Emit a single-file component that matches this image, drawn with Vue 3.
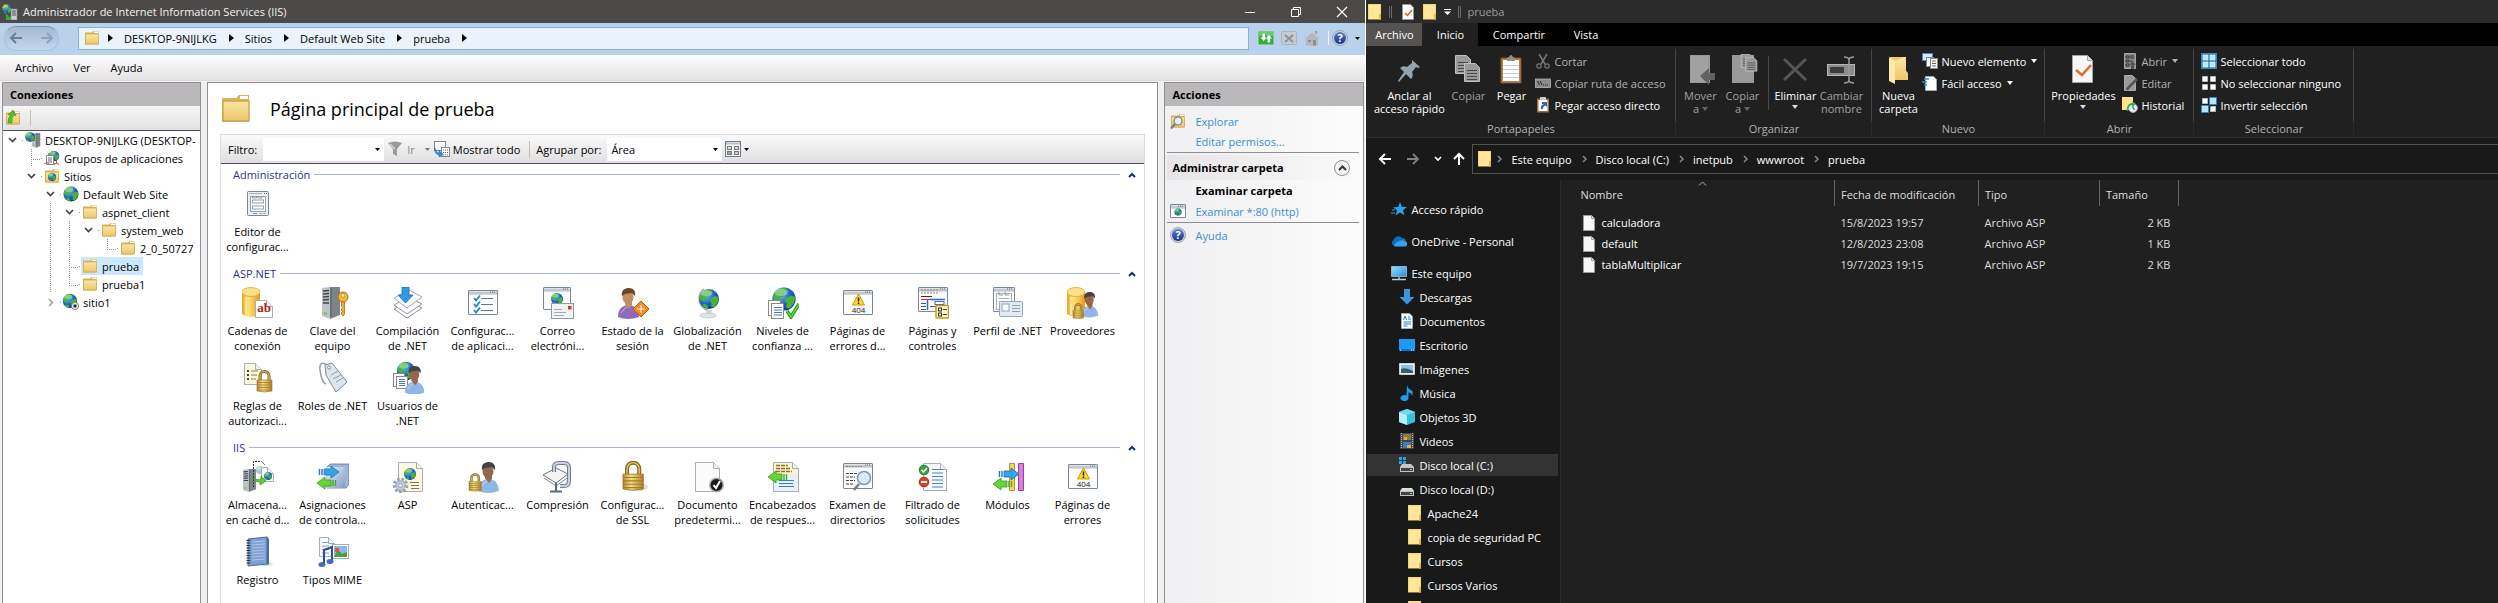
<script setup>
import { ref } from 'vue'

/* ---------- reusable drawing pieces ---------- */
const globe = (x, y, s = 1) =>
  `<g transform="translate(${x} ${y}) scale(${s})"><circle r="8" fill="url(#sea)"/><path d="M-7-3.5C-5-7-2-8 1-7.6L3-5.5 0-4 0-1.500-3-1-3.500 2-6 1-7.500-1ZM1.500-.5L5-2.500 7.500-1.500 7 3 4 6.500 1.500 6 2 3 .5 1.500ZM-4 4L-1 5-1 7.500C-3 7.200-4.500 6-5.500 5Z" fill="#46b436"/><ellipse cx="-2" cy="-4.500" rx="4.500" ry="2.500" fill="#fff" opacity=".35"/></g>`
const lock = (x, y, s = 1) =>
  `<g transform="translate(${x} ${y}) scale(${s})"><path d="M3 9V5a4.500 4.500 0 0 1 9 0v4" fill="none" stroke="#8a6a22" stroke-width="3"/><path d="M3 9V5a4.500 4.500 0 0 1 9 0v4" fill="none" stroke="#e3c878" stroke-width="1"/><path d="M0 9h15v11q-7.500 2-15 0z" fill="url(#brass)" stroke="#94701f" stroke-width=".6"/><path d="M0 11.500h15M0 14h15M0 16.500h15M0 19h15" stroke="#a27b22" stroke-width=".8"/></g>`
const person = (x, y, s = 1, coat = '#8fb6e6', skin = '#96674a', hair = '#444') =>
  `<g transform="translate(${x} ${y}) scale(${s})"><path d="M0 29C0 21 4 18 9 17q6 0 9 3 3 4 3 9-11 4-21 0z" fill="${coat}"/><path d="M7 16l4 5 3-4v-4H7z" fill="${skin}"/><ellipse cx="10" cy="9" rx="5.500" ry="7" fill="${skin}"/><path d="M4 8C3 2 7 0 11 0s7 3 6 8l-3-3-7 1z" fill="${hair}"/><path d="M3 25q3-5 6-6" stroke="#fff" stroke-width="1" opacity=".5" fill="none"/></g>`
const win = (x, y, w, h) =>
  `<rect x="${x + 0.5}" y="${y + 0.5}" width="${w - 1}" height="${h - 1}" rx=".5" fill="#fdfdfe" stroke="#7c8796"/><path d="M${x + 1} ${y + 2.5}h${w - 2}" stroke="#c3cad4" stroke-width="2"/><path d="M${x + w - 8} ${y + 2}h5" stroke="#56606e" stroke-dasharray="1 1"/><path d="M${x + 1} ${y + 4}h${w - 2}" stroke="#8d97a5" stroke-width=".7"/>`
const page = (x, y, w, h, fill = '#fbfbfc') =>
  `<path d="M${x + 0.5} ${y + 0.5}h${w - 7}l6 6v${h - 7}h-${w - 1}z" fill="${fill}" stroke="#a9adb5"/><path d="M${x + w - 6.5} ${y + 0.5}v6h6" fill="#f1f1f1" stroke="#a9adb5"/>`
const rows = (x, y, w, n, gap, color) =>
  `<path d="${Array.from({ length: n }, (_, i) => `M${x} ${y + i * gap}h${w}`).join('')}" stroke="${color}" fill="none"/>`
const server = (x, y, s = 1) =>
  `<g transform="translate(${x} ${y}) scale(${s})"><path d="M0 1l8-1v32l-8-3z" fill="#bcc2c6"/><path d="M8 0h10v28l-10 4z" fill="#7c8489"/><path d="M1 4l6-.5M1 7l6-.5M1 10l6-.5M1 13l6-.5M1 16l6 0" stroke="#3f464b" stroke-width="1.500"/><path d="M2 26l3 1" stroke="#5fd030" stroke-width="2"/><path d="M9 1v29" stroke="#565e63"/></g>`
const db = `<path d="M0 5v22q8 6 18 0V5z" fill="url(#gold)"/><ellipse cx="9" cy="5" rx="9" ry="4.500" fill="#fbe28a" stroke="#e2a62a" stroke-width=".8"/><path d="M4 10v18" stroke="#fff4bd" stroke-width="2" opacity=".7"/>`
const arrowR = (x, y) =>
  `<g transform="translate(${x} ${y})"><path d="M5 3h7V0l8 6-8 6V9H5z" fill="#35a3e8" stroke="#1d6eb5" stroke-width=".8"/><path d="M.5 3v6M3 3v6" stroke="#1d78c0" stroke-width="1.400"/></g>`
const arrowL = (x, y) =>
  `<g transform="translate(${x} ${y})"><path d="M14 3H8V0L0 6l8 6V9h6z" fill="#63d53a" stroke="#359a1c" stroke-width=".8"/><path d="M16 3v6M18.500 3v6" stroke="#3fae22" stroke-width="1.400"/></g>`
const err404 =
  win(1, 3, 30, 25) +
  `<path d="M16.500 7l6 11h-12z" fill="#ffd91c" stroke="#c99a08" stroke-linejoin="round"/><path d="M16.500 10.500v4M16.500 15.500v1.500" stroke="#222" stroke-width="1.500"/><text x="16.500" y="26" font-family="Open Sans, sans-serif" font-size="8" text-anchor="middle" fill="#222">404</text>`

/* 32 x 32 feature icons */
const art = {
  editor: `<rect x="5.500" y="3.500" width="21" height="24" rx="1" fill="#eceef2" stroke="#7e8694"/><path d="M7 5.500h13" stroke="#a8afbb"/><path d="M22 5.500h4" stroke="#4d5768" stroke-dasharray="1 1"/><rect x="8.500" y="8.500" width="15" height="15" fill="#fff" stroke="#98a0ad"/><path d="M10.500 8v2h4v-2M16 8v2h4v-2" stroke="#8790a0" fill="none"/><rect x="10.500" y="12" width="11" height="3" fill="none" stroke="#98a0ad"/><rect x="10.500" y="18" width="11" height="3" fill="none" stroke="#98a0ad"/><path d="M11 25.500h4" stroke="#29b3de"/><path d="M17 25.500h7" stroke="#a0a8b4" stroke-dasharray="3 1"/>`,
  strings: db + page(13, 13, 18, 18, '#fff') + `<text x="22" y="25" font-family="Liberation Serif, serif" font-weight="700" font-size="13" text-anchor="middle" fill="#b01818">ab</text>`,
  key: server(5, 0) + `<circle cx="26" cy="10" r="5" fill="#f5b93a" stroke="#b36f0c"/><circle cx="26" cy="8.500" r="1.800" fill="#fff" stroke="#b36f0c" stroke-width=".7"/><path d="M24.500 15h3v12l-1.500 2-1.500-1.500v-2l1-1-1-1v-2l1-1-1-1z" fill="#f0ac2e" stroke="#b36f0c" stroke-width=".8"/>`,
  compile: `<path d="M16 14l14 7-15 10L2 22z" fill="#fff" stroke="#8b9199"/><path d="M16 10l14 7-15 10L2 18z" fill="#fff" stroke="#8b9199"/><path d="M17 3l13 7-15 11L2 11z" fill="#fbfbfb" stroke="#a2a7af"/><path d="M10 0h7v8h4l-7.500 8L6 8h4z" fill="#2f9ae2" stroke="#1a6db4" stroke-width=".8"/>`,
  appconf: win(1, 3, 30, 25) + `<path d="M14 11.500h12M14 17.500h12M14 23.500h12" stroke="#6d7683"/><path d="M7 11l2 2.500 4-5M7 17l2 2.500 4-5M7 23l2 2.500 4-5" fill="none" stroke="#1c86cf" stroke-width="1.800"/>`,
  mail: win(1, 0, 28, 23) + globe(15, 12, 0.75) + `<rect x="9.500" y="16.500" width="22" height="15" fill="#f3f3f5" stroke="#9298a2"/><path d="M12 22.500h8M12 25.500h12M12 28.500h10" stroke="#a4a9b3"/><rect x="26" y="19" width="3.500" height="3.500" fill="#d43636"/>`,
  state: person(1, 1, 1, '#8d6bb8', '#c08e63', '#6b4526') + `<path d="M24 14l8 8-8 8-8-8z" fill="#f28a26" stroke="#b85508"/><path d="M24 18v8M20 22h8" stroke="#fff3d8" stroke-width="1.200"/>`,
  global: `<path d="M12 2a12 12 0 0 0 4 21" fill="none" stroke="#a9aeb5" stroke-width="2"/>${globe(17, 12, 1.25)}<path d="M14 23l1 4h4l1-4" fill="#cfd3d7"/><ellipse cx="16" cy="28.500" rx="8" ry="2.500" fill="#dfe2e5" stroke="#b5babf" stroke-width=".6"/>`,
  trust: globe(17, 12, 1.45) + `<rect x="1.500" y="13.500" width="12" height="15" fill="#fff" stroke="#8f8a7c"/><rect x="4.500" y="16.500" width="12" height="15" fill="#fff" stroke="#8f8a7c"/>${rows(7, 20.500, 8, 4, 2.500, '#4178be')}<path d="M20 24l4 6 8-13" fill="none" stroke="#2c9c1d" stroke-width="3.500"/><path d="M20 24l4 6 8-13" fill="none" stroke="#6ae04b" stroke-width="1.200"/>`,
  err404,
  controls: win(1, 0, 30, 25) + `<path d="M4 3h18M4 6h18" stroke="#8f8a6a" stroke-dasharray="2 1"/><path d="M4 9.500h11" stroke="#333" /><path d="M4 12.500h9" stroke="#d63a3a"/><path d="M13 12.500h15M10.500 13v10" stroke="#2a6ad0" stroke-width="1.500"/><path d="M4 16.500h5M4 19.500h5M4 22.500h5M13 19.500h6" stroke="#555"/><rect x="18" y="14.500" width="9" height="3" fill="none" stroke="#4c6c9c"/><rect x="19" y="18.500" width="12.500" height="12.500" rx="1" fill="#fff5c4" stroke="#c49a1e" stroke-width="1.500"/><rect x="21.500" y="21" width="3" height="3" fill="none" stroke="#333"/><rect x="21.500" y="26" width="3" height="3" fill="none" stroke="#333"/><path d="M26 22.500h4M26 27.500h4" stroke="#444"/>`,
  profile: win(1, 0, 22, 25) + `<rect x="4.500" y="6.500" width="15" height="16" fill="#fff" stroke="#a9afb9"/><path d="M7 5v3h4M13 5v3h4" stroke="#8d96a5" fill="none"/>${rows(7, 11.500, 10, 3, 3, '#a9afb9')}<rect x="7.500" y="14.500" width="23" height="15" rx="1" fill="#e2eaf3" stroke="#98a5b5"/><rect x="10" y="17" width="7" height="7" fill="#fff" stroke="#8ca0b8"/>${rows(20, 18.500, 8, 3, 3, '#8ca0b8')}`,
  providers: db + person(14, 5, 0.82) + lock(6, 17, 0.7),
  rules: page(2, 1, 18, 22, '#fdf8dc') + `<path d="M5 9h2M5 13h2M5 17h2" stroke="#444" stroke-width="2"/><path d="M9 9h7M9 13h6M9 17h5" stroke="#8b7d4d"/>` + lock(15, 9, 1),
  tag: `<path d="M11 4C6-1 2 1 3 8s2 12 6 14" fill="none" stroke="#9aa0a8" stroke-width="1.500"/><path d="M8 3l7-2 15 19-11 10L9 13z" fill="#dde6ee" stroke="#7e8b9a"/><circle cx="12" cy="5.500" r="1.500" fill="#fff" stroke="#7e8b9a"/><path d="M14 13l7-4M16 17l8-4M19 20l7-4" stroke="#8f9dad"/>`,
  users: globe(14, 9, 1.15) + `<rect x="1.500" y="11.500" width="11" height="13" fill="#fff" stroke="#8f8a7c"/><rect x="4.500" y="14.500" width="11" height="12" fill="#fff" stroke="#8f8a7c"/>${rows(7, 17.500, 6, 4, 2, '#4178be')}` + person(13, 4, 0.92),
  cache: server(1, 8, 0.72) + `<path d="M11.500 26V.5h8l4 4" fill="none" stroke="#333" stroke-dasharray="2 1"/><g opacity=".4">${globe(18, 9, 0.5)}</g>` + page(19, 6, 13, 15, '#fff') + globe(26, 15, 0.5) + `<path d="M11 17c4 2 6 2 8 1v-3l5 5-6 4v-3c-3 0-6-1-7-4z" fill="#5ccc3a" stroke="#2f8f1b" stroke-width=".7"/>`,
  handlers: `<path d="M10 6l3-3h19v20l-3 4H10z" fill="#9fb6d8" stroke="#5b7399" stroke-width=".8"/><path d="M10 6h18v21H10z" fill="url(#steel)"/>` + arrowR(2, 5) + arrowL(0, 16),
  asp: page(6, 1, 25, 30, '#fbf6dc') + globe(18, 13, 0.75) + `<path d="M18 21.500h9M19 24.500h8M19 27.500h8" stroke="#7d7550"/><circle cx="8.500" cy="24.500" r="6.500" fill="none" stroke="#8e9fb6" stroke-width="2.500" stroke-dasharray="2.500 1.900"/><circle cx="8.500" cy="24.500" r="4.800" fill="#c5d0df" stroke="#8a9ab0"/><circle cx="8.500" cy="24.500" r="2" fill="#fff" stroke="#8a9ab0"/>`,
  auth: person(11, 1, 1) + lock(2, 13, 0.82),
  compress: `<path d="M1 14L14 7l12 6-12 9z" fill="#f4f4f4" stroke="#777"/><path d="M2 17l12 8 11-8" fill="none" stroke="#888"/><path d="M12 11V6q0-4 5-4h5q5 0 5 5v13q0 5-5 5h-4" fill="none" stroke="#6f7d93" stroke-width="4"/><path d="M12 11V6q0-4 5-4h5q5 0 5 5v13q0 5-5 5h-4" fill="none" stroke="#c8d1df" stroke-width="2"/><path d="M14 22v8M8 30.500h12" stroke="#5c6880" stroke-width="2"/>`,
  ssl: `<ellipse cx="22" cy="26" rx="9" ry="4" fill="#000" opacity=".12"/>` + lock(6, 1, 1.35),
  defdoc: page(3, 1, 25, 30) + `<circle cx="24.500" cy="24" r="6.700" fill="#1b1b1b" stroke="#aaa" stroke-width="1.500"/><path d="M21.500 24l2.500 3 4-7" fill="none" stroke="#fff" stroke-width="2"/>`,
  headers: page(6, 1, 26, 30, '#e6f1fb') + `<path d="M7 2h18l0 6h6v5H7z" fill="#fdf6c8"/><path d="M9 4.500h12M9 7.500h14M9 10.500h16" stroke="#9a6a2a" stroke-width="1.500" stroke-dasharray="4 1"/><path d="M12 19.500h15M12 22.500h14M12 25.500h15" stroke="#3f7cc4"/>` + arrowL(1, 10),
  browse: win(1, 2, 30, 26) + `<path d="M4 5.500h16" stroke="#8f8a6a" stroke-dasharray="2 1"/><path d="M4 12.500h12M4 16h9M4 19.500h9M4 23h8" stroke="#3d3d3d" stroke-dasharray="3 1"/><path d="M17 23l-5 6" stroke="#7a7a7a" stroke-width="2.500"/><circle cx="22" cy="17" r="6.500" fill="#d9ecfa" stroke="#8696a8" stroke-width="1.500"/>`,
  filter: page(6, 2, 24, 28, '#f7f9fd') + rows(15, 8.500, 11, 6, 3.500, '#4a80c8') + `<circle cx="7" cy="9" r="4.800" fill="#3fa143" stroke="#287a2c"/><path d="M4.500 9l2 2 3.500-4" fill="none" stroke="#fff" stroke-width="1.500"/><circle cx="7" cy="21" r="4.800" fill="#dd4422" stroke="#a92d12"/><path d="M4 21h6" stroke="#fff" stroke-width="2"/>`,
  modules: `<path d="M17.500 2.500h5v27h-5z" fill="#f5d55a" stroke="#b9922b"/><path d="M26.500 2.500h5v27h-5z" fill="#dd7edd" stroke="#9a3f9e"/>` + arrowR(7, 7) + arrowL(1, 17),
  log: `<ellipse cx="24" cy="28" rx="7" ry="2" fill="#000" opacity=".12"/><path d="M6 3l19-2v27l-19 2z" fill="#7fa0d2" stroke="#48699c"/><path d="M25 1l2 2v25l-2 1z" fill="#48699c"/><path d="M10 6l13-1M10 9l13-1M10 12l13-1M10 15l13-1M10 18l13-1M10 21l13-1M10 24l13-1" stroke="#aec5e8"/><path d="M6.500 4v25" stroke="#333" stroke-width="4" stroke-dasharray="1 1.500"/>`,
  mime: page(2, 1, 16, 20) + rows(5, 6.500, 7, 4, 3.500, '#7ea0c8') + `<rect x="15.500" y="8.500" width="16" height="14" fill="#fff" stroke="#a5abb5"/><path d="M17 10h13v11H17z" fill="#86b9ec"/><path d="M17 21l4-8 4 5 5-2v5z" fill="#4d9e3c"/><path d="M18 12h4v4h-4z" fill="#e0552f"/><path d="M7 28V14l8-3v14" fill="none" stroke="#29509c" stroke-width="2"/><ellipse cx="5" cy="28.500" rx="3.500" ry="2.500" fill="#3c6cc4"/><ellipse cx="13" cy="25.500" rx="3.500" ry="2.500" fill="#3c6cc4"/>`
}

/* 16 x 16 icons */
const iisFolder = `<path d="M1 2.500h7l1.500-1.500h5V14.500H1z" fill="#d9b45a"/><path d="M1.500 4h13v10h-13z" fill="url(#fold)" stroke="#c9a652" stroke-width=".7"/><path d="M10 1.500h4v1.500h-4z" fill="#fff"/>`
const winFolder = `<path d="M1 0h13v15.500H1z" fill="#f6d775"/><path d="M2 1h11v14H2z" fill="#ffe699"/><path d="M12 10h2v5.500h-2z" fill="#e6b93c"/>`
const small = {
  iisFolder,
  winFolder,
  server: server(7, 1, 0.46) + globe(5, 5, 0.6),
  pools: `<path d="M4.500 3.500h8v10h-8z" fill="#fff" stroke="#888"/>${globe(10, 6, 0.65)}<path d="M2.500 5.500h7v9h-7z" fill="#fff" stroke="#888"/><path d="M4 8h4M4 10h4M4 12h4" stroke="#667"/><path d="M0 14.500q3-4 5 0M10 14.500q2-3 5 0" stroke="#c33" fill="none"/>`,
  sites: iisFolder + globe(8, 9, 0.5),
  globe: globe(8, 8, 0.95),
  globeStop: globe(7, 7, 0.9) + `<circle cx="12" cy="12" r="3.500" fill="#fff" stroke="#777"/><path d="M10.500 10.500h3v3h-3z" fill="#222"/>`,
  up: iisFolder + `<path d="M3 13q0-6 3-8H3l5-5 3 6-2-1q-3 3-2 8z" fill="#53c22c" stroke="#2c8a14" stroke-width=".6"/>`,
  funnel: `<path d="M0 2q7-3 14 0L9 8v7l-4-2V8z" fill="#9a9a9a"/><path d="M2 3l5 5" stroke="#d5d5d5" stroke-width="1.500"/>`,
  showAll: `<rect x=".5" y=".5" width="11" height="9" fill="#f8f9fb" stroke="#7c8796"/><rect x="7.500" y="6.500" width="8" height="9" fill="#fff" stroke="#7c8796"/><path d="M9 9h5M9 11.500h5M9 14h5" stroke="#567" stroke-dasharray="1 1"/><path d="M1 7q1 5 4 5v-2.500l4 4-4 3V14Q0 13 1 7z" fill="#2f8fd8" stroke="#1a62a4" stroke-width=".5"/>`,
  view: `<rect x=".5" y=".5" width="15" height="15" fill="#f5f6f8" stroke="#6f7a8a"/><path d="M1 2.500h14" stroke="#b8c0cc" stroke-width="2"/><rect x="2.500" y="5.500" width="4" height="3" fill="#dfe9b8" stroke="#777"/><rect x="9.500" y="5.500" width="4" height="3" fill="#cfe0f4" stroke="#777"/><rect x="2.500" y="10.500" width="4" height="3" fill="#9a9aea" stroke="#777"/><rect x="9.500" y="10.500" width="4" height="3" fill="#ecc8a8" stroke="#777"/>`,
  explore: iisFolder + `<path d="M5 11l-4 4.500" stroke="#777" stroke-width="2"/><circle cx="8" cy="8" r="4" fill="#dfeffa" stroke="#6f7c8a" stroke-width="1.200"/>`,
  browse: win(0, 1, 16, 14) + globe(8, 9, 0.45),
  help: `<circle cx="8" cy="8" r="7.500" fill="#cdd3dc" stroke="#8f98a6" stroke-width=".8"/><circle cx="8" cy="8" r="6" fill="url(#helpb)"/><text x="8" y="12" font-family="Open Sans, sans-serif" font-size="11" font-weight="700" text-anchor="middle" fill="#fff">?</text>`,
  refresh: `<rect x=".5" y="1.500" width="15" height="13" rx="1" fill="#2fae3c" stroke="#7cc884"/><path d="M1 2h14v4H1z" fill="#8fdc90" opacity=".6"/><path d="M4.500 3.500v4H2.500l3.200 3.500L9 7.500H7V3.500zM9.500 12.500V8.500H7.500L11 5l3.200 3.500h-2v4z" fill="#fff"/>`,
  stop: `<rect x=".5" y="1.500" width="15" height="13" rx="1" fill="#c6cbd2" stroke="#aeb4bd"/><path d="M4 5l8 7M12 5l-8 7" stroke="#8d939c" stroke-width="2"/>`,
  home: `<path d="M0 8l8-7.500L16 8l-2 1v6.500H2V9z" fill="#b2b8bf"/><path d="M1 8l7-6.500L15 8" stroke="#d9dde1" fill="none"/><path d="M11 1h2v4l-2-2z" fill="#9aa0a8"/><path d="M4 10h3v2H4zM9 10h3v5.500H9z" fill="#8a9098"/>`,
  app: globe(5, 5, 0.6) + `<path d="M3 0l-3 4 4-1z" fill="#f8c53a"/><path d="M9 5h6v11H9z" fill="#c9ced2" stroke="#81888e" stroke-width=".6"/><path d="M10 7h4M10 9h4M10 11h4" stroke="#4d555b"/><path d="M4 9l3 4 2-1v4H4z" fill="#3ea63a"/>`,
  propDoc: `<path d="M2.500.5h8l3 3v12h-11z" fill="#fff" stroke="#999"/><path d="M5 9l2.500 2.500L12 6" fill="none" stroke="#d9602b" stroke-width="1.500"/>`,
  cut: `<path d="M4 1l6 10M12 1L6 11" stroke="#777" stroke-width="1.500"/><circle cx="4" cy="13" r="2.200" fill="none" stroke="#777" stroke-width="1.200"/><circle cx="12" cy="13" r="2.200" fill="none" stroke="#777" stroke-width="1.200"/>`,
  path: `<rect x=".5" y="4" width="15" height="8.500" fill="#8a8a8a" stroke="#b5b5b5" stroke-width=".8"/><path d="M2.500 6l2 4M5 6l2 4" stroke="#222"/><path d="M8 10h6" stroke="#222" stroke-dasharray="1 1"/>`,
  pasteLink: `<path d="M2 1.500h12v14H2z" fill="#9b6b41"/><path d="M5 0h6v3H5z" fill="#c8c8c8"/><path d="M3.500 3h9v11h-9z" fill="#fff"/><path d="M6 12q-1-4 3-5H7V5h5v5l-1.500-1.500Q8 9 8 12z" fill="#2668b8"/>`,
  newItem: `<rect x=".5" y=".5" width="10" height="7" fill="#d4ecfa" stroke="#3c8cc8"/><rect x="4.500" y="4.500" width="7" height="9" fill="#fff" stroke="#888"/><rect x="8.500" y="5.500" width="7" height="10" fill="#fff" stroke="#888"/><path d="M10 8h4M10 10.500h4M10 13h4" stroke="#666"/>`,
  easy: `<path d="M3.500 1.500h8l3 3v11h-11z" fill="#fff" stroke="#aaa"/><path d="M2 4h5M0 7h5M2 10h3" stroke="#2f8fd8" stroke-width="1.300"/>`,
  open: `<path d="M2.500.5h11v15h-11z" fill="#8b8b8b" stroke="#a5a5a5"/><path d="M4 3h3v2H4zM4 7h3v2H4zM4 11h3v2H4zM8 3h4M8 5h4M8 8h3" stroke="#333" fill="none"/><path d="M9 16v-4H7l3.500-4L14 12h-2v4z" fill="#555" />`,
  edit: `<path d="M2.500.5h8l3 3v12h-11z" fill="#9a9a9a" stroke="#aaa"/><path d="M15 4L6 13l-1 2" stroke="#555" stroke-width="2.500"/>`,
  history: `<path d="M0 0h11v13H0z" fill="#ffe28a"/><circle cx="11" cy="11" r="4.500" fill="#e8eef0" stroke="#999"/><path d="M11 8.500v3l2 1" stroke="#444" fill="none"/><path d="M5 14q-1-8 6-8l-1-2 4 3-4 2.500V8q-4 1-4 6z" fill="#2fb14a"/>`,
  selAll: `<path d="M0 0h16v16H0z" fill="#2d87cf"/><path d="M2 2h5v5H2zM9 2h5v5H9zM2 9h5v5H2zM9 9h5v5H9z" fill="#bfe3fb" stroke="#fff" stroke-width=".5"/>`,
  selNone: `<path d="M1.500 1.500h5v5h-5zM9.500 1.500h5v5h-5zM1.500 9.500h5v5h-5zM9.500 9.500h5v5h-5z" fill="#fff" stroke="#bbb"/>`,
  selInv: `<path d="M1.500 1.500h5v5h-5zM9.500 9.500h5v5h-5z" fill="#fff" stroke="#bbb"/><path d="M8.500.5h7v7h-7zM.5 8.500h7v7h-7z" fill="#bfe3fb" stroke="#2d87cf"/>`,
  star: `<path d="M9 1l1.800 4.800 5.200.2-4 3.300 1.400 5L9 11.500l-4.500 3 1.500-5-4-3.300 5.200-.3z" fill="#2f9fe8"/><path d="M1 9h3M0 12h4" stroke="#2f9fe8"/>`,
  cloud: `<path d="M3 12.500a3 3 0 0 1-.5-5.500A5 5 0 0 1 11 5a4 4 0 0 1 4 4q1 3-2 3.500z" fill="#0f6cbd"/><path d="M4 13.500h9.500a2.500 2.500 0 0 0 .5-5Q10 6 7 9q-3 0-4 4z" fill="#3aa0ea"/>`,
  pc: `<path d="M.5 1.500h15v10H.5z" fill="url(#screen)" stroke="#9fd4f5" stroke-width=".7"/><path d="M7 12h2v2H7z" fill="#889"/><path d="M1 14.500h14" stroke="#c8ccd0" stroke-width="1.500"/>`,
  down: `<path d="M5 0h6v8h4.500L8 15.500.5 8H5z" fill="#3a96dd"/>`,
  docs: `<path d="M2.500.5h8l3 3v12h-11z" fill="#fff" stroke="#aaa"/><path d="M4.500 7l1.500-4 1.500 4M9 4h2M9 6h3M4.500 9h7.500M4.500 11h7.500M4.500 13h4" stroke="#2b7cc4" fill="none"/>`,
  desk: `<path d="M0 2h16v12H0z" fill="#1e9bf0"/><path d="M0 12h16v2H0z" fill="#0d78c8"/><path d="M1 13h2M12 13h3" stroke="#fff" stroke-dasharray="1 1"/>`,
  pics: `<path d="M.5 2.500h15v11H.5z" fill="#eee" stroke="#ccc"/><path d="M2 4h12v8H2z" fill="#8cc1ee"/><path d="M2 8q5-2 12 2v2H2z" fill="#3b5c66"/>`,
  music: `<path d="M8 0q1 4 4 5t1 6q0-3-3.500-3.500v5.500a4 3 0 1 1-2-2.500z" fill="#1e9bf0"/>`,
  obj: `<path d="M0 3l8-3 8 3v10l-8 3-8-3z" fill="#36c1dc"/><path d="M0 3l8 3v10l-8-3z" fill="#b7eff5"/><path d="M0 3l8-3 8 3-8 3z" fill="#6fdcea"/>`,
  video: `<path d="M1 0h14v16H1z" fill="#444"/><path d="M2.500 0v16M13.500 0v16" stroke="#bbb" stroke-width="1.200" stroke-dasharray="1 1"/><path d="M4 1h8v6H4z" fill="#8a7a4a"/><path d="M4 9h8v6H4z" fill="#4379d0"/><path d="M5 4h3v3H5zM8 12h4v3H8z" fill="#e0b02d"/>`,
  diskC: `<path d="M0 0h3v3H0zM4 0h3v3H4zM0 4h3v3H0zM4 4h3v3H4z" fill="#29a8e0"/><path d="M3 7h9l3 3H1z" fill="#c9c9c9"/><path d="M1 10h14v5H1z" fill="#c2c2c2"/><path d="M2 11h12v3H2z" fill="#444"/><path d="M11 12.500h2" stroke="#5f5"/>`,
  disk: `<path d="M3 7h10l2 3H1z" fill="#dcdcdc"/><path d="M1 10h14v5H1z" fill="#c2c2c2"/><path d="M2 11h12v3H2z" fill="#444"/><path d="M11 12.500h2" stroke="#5f5"/>`,
  file: `<path d="M2.500.5h8l3 3v12h-11z" fill="#f7f7f7" stroke="#9d9d9d"/><path d="M10.500.5v3h3" fill="#ddd" stroke="#9d9d9d"/>`
}

/* 32 x 32 ribbon icons */
const grayDoc = (x, y) => `<path d="M${x + 0.5} ${y + 0.5}h11l4 4v14h-15z" fill="#9a9a9a" stroke="#c0c0c0"/><path d="M${x + 3} ${y + 7.5}h10M${x + 3} ${y + 10.5}h10M${x + 3} ${y + 13.5}h10M${x + 3} ${y + 16.5}h10" stroke="#4a4a4a"/>`
const big = {
  pin: `<path d="M19 6l8 7-2 1-2-1-4 5q2 4-1 7l-5-5-7 8-1-1 6-9-4-4q3-3 7-1l5-4z" fill="#93a4b1"/>`,
  copy: grayDoc(3, 1) + grayDoc(12, 9),
  paste: `<path d="M6 4h20v25H6z" fill="#b98350" stroke="#7d5228"/><path d="M8 6h16v21H8z" fill="#fff"/><path d="M8 11.500h16M8 15.500h16M8 19.500h16M8 23.500h16" stroke="#b9d2ea"/><path d="M12 7V4l2-1q2-4 4 0l2 1v3z" fill="#8f8f8f"/>`,
  move: `<path d="M6 1h20v28H6z" fill="#9a9a9a"/><path d="M7 2h17v26H7z" fill="#a4a4a4" opacity=".7"/><path d="M16 22l9-8v5h6v7h-6v5z" fill="#5f6365"/>`,
  copyTo: `<path d="M6 1h22v28H6z" fill="#999"/>` + `<g transform="translate(14 -2) scale(.75)">${grayDoc(1, 2)}${grayDoc(7, 7)}</g>`,
  del: `<path d="M5 5l22 21M27 5L5 26" stroke="#565656" stroke-width="3"/>`,
  rename: `<rect x="2.500" y="10.500" width="27" height="11" fill="#8c8c8c" stroke="#b5b5b5"/><rect x="5" y="13" width="14" height="6" fill="#3b3b3b"/><path d="M19 3q5 0 5 3v20q0 3-5 3M29 3q-5 0-5 3v20q0 3 5 3" stroke="#9a9a9a" fill="none" stroke-width="1.500"/>`,
  folder: `<path d="M8 3h16v14l2 2v7H10z" fill="#f0cd6c"/><path d="M7 3l6 4v23l-6-3z" fill="#ffe9a6"/><path d="M13 7l9-4h2v14l1 2v7H13z" fill="url(#fold)"/>`,
  props: `<path d="M5.500 1.500h15l5 5v22h-20z" fill="#f7f7f7" stroke="#a5a5a5"/><path d="M20.500 1.500v5h5" fill="#ddd" stroke="#a5a5a5"/><path d="M9 16l6 5 9-10" fill="none" stroke="#dd6b2e" stroke-width="2.500"/>`
}

/* ---------- data ---------- */
const crumbs = ['DESKTOP-9NIJLKG', 'Sitios', 'Default Web Site', 'prueba']
const tree = [
  { g: '', own: 'open', icon: 'server', t: 'DESKTOP-9NIJLKG (DESKTOP-' },
  { g: ' ', own: 'tee', icon: 'pools', t: 'Grupos de aplicaciones' },
  { g: ' ', own: 'open', icon: 'sites', t: 'Sitios' },
  { g: '  ', own: 'open', icon: 'globe', t: 'Default Web Site' },
  { g: '  |', own: 'open', icon: 'iisFolder', t: 'aspnet_client' },
  { g: '  ||', own: 'open', icon: 'iisFolder', t: 'system_web' },
  { g: '  || ', own: 'elbow', icon: 'iisFolder', t: '2_0_50727' },
  { g: '  |', own: 'tee', icon: 'iisFolder', t: 'prueba', sel: true },
  { g: '  |', own: 'elbow', icon: 'iisFolder', t: 'prueba1' },
  { g: '  ', own: 'closed', icon: 'globeStop', t: 'sitio1' }
]
const groups = [
  { name: 'Administración', items: [['editor', 'Editor de', 'configurac...']] },
  {
    name: 'ASP.NET',
    items: [
      ['strings', 'Cadenas de', 'conexión'], ['key', 'Clave del', 'equipo'], ['compile', 'Compilación', 'de .NET'],
      ['appconf', 'Configurac...', 'de aplicaci...'], ['mail', 'Correo', 'electróni...'], ['state', 'Estado de la', 'sesión'],
      ['global', 'Globalización', 'de .NET'], ['trust', 'Niveles de', 'confianza ...'], ['err404', 'Páginas de', 'errores d...'],
      ['controls', 'Páginas y', 'controles'], ['profile', 'Perfil de .NET'], ['providers', 'Proveedores'],
      ['rules', 'Reglas de', 'autorizaci...'], ['tag', 'Roles de .NET'], ['users', 'Usuarios de', '.NET']
    ]
  },
  {
    name: 'IIS',
    items: [
      ['cache', 'Almacena...', 'en caché d...'], ['handlers', 'Asignaciones', 'de controla...'], ['asp', 'ASP'],
      ['auth', 'Autenticac...'], ['compress', 'Compresión'], ['ssl', 'Configurac...', 'de SSL'],
      ['defdoc', 'Documento', 'predetermi...'], ['headers', 'Encabezados', 'de respues...'], ['browse', 'Examen de', 'directorios'],
      ['filter', 'Filtrado de', 'solicitudes'], ['modules', 'Módulos'], ['err404', 'Páginas de', 'errores'],
      ['log', 'Registro'], ['mime', 'Tipos MIME']
    ]
  }
]
const filterText = ref('')

const ribbon = [
  {
    label: 'Portapapeles', cls: 'g-clip',
    parts: [
      { big: 'pin', l: ['Anclar al', 'acceso rápido'], w: 'w78' },
      { big: 'copy', l: ['Copiar'], w: 'w40', off: true },
      { big: 'paste', l: ['Pegar'], w: 'w46' },
      { list: [['cut', 'Cortar', 1], ['path', 'Copiar ruta de acceso', 1], ['pasteLink', 'Pegar acceso directo']] }
    ]
  },
  {
    label: 'Organizar', cls: 'g-org',
    parts: [
      { big: 'move', l: ['Mover', 'a'], w: 'w42', off: true, inline: true },
      { big: 'copyTo', l: ['Copiar', 'a'], w: 'w42', off: true, inline: true },
      { sep: true },
      { big: 'del', l: ['Eliminar'], w: 'w46', drop: true },
      { big: 'rename', l: ['Cambiar', 'nombre'], w: 'w46', off: true }
    ]
  },
  {
    label: 'Nuevo', cls: 'g-new',
    parts: [
      { big: 'folder', l: ['Nueva', 'carpeta'], w: 'w46' },
      { list: [['newItem', 'Nuevo elemento', 0, 1], ['easy', 'Fácil acceso', 0, 1]] }
    ]
  },
  {
    label: 'Abrir', cls: 'g-open',
    parts: [
      { big: 'props', l: ['Propiedades'], w: 'w70', drop: true },
      { list: [['open', 'Abrir', 1, 1], ['edit', 'Editar', 1], ['history', 'Historial']] }
    ]
  },
  {
    label: 'Seleccionar', cls: 'g-sel',
    parts: [{ list: [['selAll', 'Seleccionar todo'], ['selNone', 'No seleccionar ninguno'], ['selInv', 'Invertir selección']] }]
  }
]
const path = ['Este equipo', 'Disco local (C:)', 'inetpub', 'wwwroot', 'prueba']
const nav = [
  { i: 'star', t: 'Acceso rápido', l: 0, gap: true }, { i: 'cloud', t: 'OneDrive - Personal', l: 0, gap: true },
  { i: 'pc', t: 'Este equipo', l: 0 }, { i: 'down', t: 'Descargas', l: 1 }, { i: 'docs', t: 'Documentos', l: 1 },
  { i: 'desk', t: 'Escritorio', l: 1 }, { i: 'pics', t: 'Imágenes', l: 1 }, { i: 'music', t: 'Música', l: 1 },
  { i: 'obj', t: 'Objetos 3D', l: 1 }, { i: 'video', t: 'Videos', l: 1 }, { i: 'diskC', t: 'Disco local (C:)', l: 1, sel: true },
  { i: 'disk', t: 'Disco local (D:)', l: 1 }, { i: 'winFolder', t: 'Apache24', l: 2 },
  { i: 'winFolder', t: 'copia de seguridad PC', l: 2 }, { i: 'winFolder', t: 'Cursos', l: 2 },
  { i: 'winFolder', t: 'Cursos Varios', l: 2 }, { i: 'winFolder', t: '', l: 2 }
]
const files = [
  ['calculadora', '15/8/2023 19:57', 'Archivo ASP', '2 KB'],
  ['default', '12/8/2023 23:08', 'Archivo ASP', '1 KB'],
  ['tablaMultiplicar', '19/7/2023 19:15', 'Archivo ASP', '2 KB']
]
</script>

<template>
  <div class="desktop">
    <svg class="defs" width="0" height="0" aria-hidden="true">
      <defs>
        <radialGradient id="sea" cx=".35" cy=".3" r=".8"><stop offset="0" stop-color="#6fc3f5" /><stop offset=".55" stop-color="#1f63c4" /><stop offset="1" stop-color="#0c2f80" /></radialGradient>
        <linearGradient id="brass"><stop offset="0" stop-color="#b98d2c" /><stop offset=".4" stop-color="#f3dc8c" /><stop offset="1" stop-color="#b1832a" /></linearGradient>
        <linearGradient id="gold"><stop offset="0" stop-color="#eaa51c" /><stop offset=".35" stop-color="#fde377" /><stop offset="1" stop-color="#e79b14" /></linearGradient>
        <linearGradient id="fold" x2="0" y2="1"><stop offset="0" stop-color="#fbe6a6" /><stop offset="1" stop-color="#ecc768" /></linearGradient>
        <linearGradient id="steel" x2="1" y2="1"><stop offset="0" stop-color="#e8f0fa" /><stop offset="1" stop-color="#7f9bc6" /></linearGradient>
        <linearGradient id="screen" x2="1" y2="1"><stop offset="0" stop-color="#9edcff" /><stop offset="1" stop-color="#1f8fe0" /></linearGradient>
        <linearGradient id="helpb" x2="0" y2="1"><stop offset="0" stop-color="#5d7fd8" /><stop offset="1" stop-color="#16308e" /></linearGradient>
      </defs>
    </svg>

    <!-- IIS manager -->
    <section class="iis">
      <header class="iis-title">
        <svg class="i16" viewBox="0 0 16 16" v-html="small.app"></svg>
        <span>Administrador de Internet Information Services (IIS)</span>
        <div class="caption">
          <button aria-label="Minimizar"><svg width="12" height="12"><path d="M1 6.500h10" stroke="#fff" /></svg></button>
          <button aria-label="Restaurar"><svg width="12" height="12" fill="none" stroke="#fff"><path d="M1.500 3.500h7v7h-7zM3.500 3V1.500h7v7H9" /></svg></button>
          <button aria-label="Cerrar"><svg width="12" height="12"><path d="M1 1l10 10M11 1L1 11" stroke="#fff" stroke-width="1.200" /></svg></button>
        </div>
      </header>

      <div class="iis-address">
        <div class="backfwd">
          <button aria-label="Atrás"><svg width="14" height="12" fill="none" stroke="#6b7f97" stroke-width="2"><path d="M13 6H2M7 1L2 6l5 5" /></svg></button>
          <button aria-label="Adelante"><svg width="14" height="12" fill="none" stroke="#8ca2bd" stroke-width="2"><path d="M1 6h11M7 1l5 5-5 5" /></svg></button>
        </div>
        <nav class="crumbs">
          <svg class="i16" viewBox="0 0 16 16" v-html="small.iisFolder"></svg>
          <svg class="tri" width="5" height="8"><path d="M0 0l5 4-5 4z" /></svg>
          <template v-for="c in crumbs" :key="c">
            <a href="#">{{ c }}</a><svg class="tri" width="5" height="8"><path d="M0 0l5 4-5 4z" /></svg>
          </template>
        </nav>
        <div class="addr-tools">
          <button aria-label="Actualizar"><svg class="i16" viewBox="0 0 16 16" v-html="small.refresh"></svg></button>
          <button aria-label="Detener"><svg class="i16" viewBox="0 0 16 16" v-html="small.stop"></svg></button>
          <button aria-label="Inicio"><svg class="i16" viewBox="0 0 16 16" v-html="small.home"></svg></button>
          <i class="bar"></i>
          <button aria-label="Ayuda" class="helpbtn"><svg class="i16" viewBox="0 0 16 16" v-html="small.help"></svg><svg width="5" height="3"><path d="M0 0h5L2.500 3z" /></svg></button>
        </div>
      </div>

      <nav class="iis-menu"><button>Archivo</button><button>Ver</button><button>Ayuda</button></nav>

      <div class="iis-body">
        <aside class="pane conn">
          <h2>Conexiones</h2>
          <div class="conn-tools"><button aria-label="Subir"><svg class="i16" viewBox="0 0 16 16" v-html="small.up"></svg></button><i></i></div>
          <ul class="tree">
            <li v-for="n in tree" :key="n.t">
              <span v-for="(c, k) in n.g" :key="k" class="guide" :class="{ line: c === '|' }"></span>
              <span class="guide" :class="n.own">
                <svg v-if="n.own === 'open'" width="9" height="6"><path d="M1 1l3.500 3.500L8 1" fill="none" stroke="#404040" stroke-width="1.600" /></svg>
                <svg v-if="n.own === 'closed'" width="6" height="9"><path d="M1 1l3.500 3.500L1 8" fill="none" stroke="#a6a6a6" stroke-width="1.600" /></svg>
              </span>
              <i class="dots"></i>
              <span class="node" :class="{ sel: n.sel }"><svg class="i16" viewBox="0 0 16 16" v-html="small[n.icon]"></svg>{{ n.t }}</span>
            </li>
          </ul>
        </aside>

        <main class="pane center">
          <div class="heading"><svg width="32" height="32" viewBox="0 0 16 16" v-html="small.iisFolder"></svg><h1>Página principal de prueba</h1></div>
          <div class="features">
            <div class="ftools">
              <label for="filtro">Filtro:</label>
              <div class="combo fcombo"><input id="filtro" v-model="filterText" type="text" /><svg width="5" height="3"><path d="M0 0h5L2.500 3z" /></svg></div>
              <button class="go"><svg class="i16" viewBox="0 0 16 16" v-html="small.funnel"></svg>Ir<svg class="godrop" width="5" height="3" fill="#777"><path d="M0 0h5L2.500 3z" /></svg></button>
              <button class="all"><svg class="i16" viewBox="0 0 16 16" v-html="small.showAll"></svg>Mostrar todo</button>
              <i></i>
              <label for="grupo">Agrupar por:</label>
              <div class="combo gcombo"><select id="grupo"><option>Área</option></select><svg width="5" height="3"><path d="M0 0h5L2.500 3z" /></svg></div>
              <button class="viewbtn" aria-label="Vistas"><svg class="i16" viewBox="0 0 16 16" v-html="small.view"></svg><svg width="5" height="3"><path d="M0 0h5L2.500 3z" /></svg></button>
            </div>
            <section v-for="g in groups" :key="g.name" class="group">
              <h3><span>{{ g.name }}</span><i></i><button aria-label="Contraer"><svg width="8" height="6"><path d="M1 5l3-3 3 3" fill="none" stroke="#14307c" stroke-width="2" /></svg></button></h3>
              <div class="tiles">
                <button v-for="it in g.items" :key="it[0]" class="tile">
                  <svg width="32" height="32" viewBox="0 0 32 32" v-html="art[it[0]]"></svg>
                  <span v-for="t in it.slice(1)" :key="t">{{ t }}</span>
                </button>
              </div>
            </section>
          </div>
        </main>

        <aside class="pane actions">
          <h2>Acciones</h2>
          <div class="act-body">
            <a href="#"><svg class="i16" viewBox="0 0 16 16" v-html="small.explore"></svg>Explorar</a>
            <a href="#"><span class="i16"></span>Editar permisos...</a>
            <hr />
            <h3>Administrar carpeta<button aria-label="Contraer"><svg width="9" height="6"><path d="M1 5l3.500-3.500L8 5" fill="none" stroke="#333" stroke-width="2" /></svg></button></h3>
            <h4>Examinar carpeta</h4>
            <a href="#"><svg class="i16" viewBox="0 0 16 16" v-html="small.browse"></svg>Examinar *:80 (http)</a>
            <hr />
            <a href="#" class="last"><svg class="i16" viewBox="0 0 16 16" v-html="small.help"></svg>Ayuda</a>
          </div>
        </aside>
      </div>
    </section>

    <!-- File explorer -->
    <section class="exp">
      <header class="exp-title">
        <svg class="i16" viewBox="0 0 16 16" v-html="small.winFolder"></svg><i></i>
        <button aria-label="Propiedades"><svg class="i16" viewBox="0 0 16 16" v-html="small.propDoc"></svg></button>
        <button aria-label="Nueva carpeta"><svg class="i16" viewBox="0 0 16 16" v-html="small.winFolder"></svg></button>
        <svg class="qat" width="7" height="6" fill="#fff"><path d="M0 0h7v1H0zM0 2.500h7L3.500 6z" /></svg><i class="second"></i>
        <span>prueba</span>
      </header>
      <nav class="tabs"><button class="t-file">Archivo</button><button class="t-home">Inicio</button><button class="t-share">Compartir</button><button class="t-view">Vista</button></nav>

      <div class="ribbon">
        <div v-for="g in ribbon" :key="g.label" class="rgroup" :class="g.cls">
          <div class="rcontent">
            <template v-for="(p, k) in g.parts" :key="k">
              <i v-if="p.sep" class="rsep"></i>
              <div v-else-if="p.list" class="rlist">
                <button v-for="s in p.list" :key="s[1]" :class="{ off: s[2] }">
                  <svg class="i16" viewBox="0 0 16 16" v-html="small[s[0]]"></svg>{{ s[1] }}<svg v-if="s[3]" class="rd" width="6" height="4"><path d="M0 0h6L3 4z" fill="currentColor" /></svg>
                </button>
              </div>
              <button v-else class="rbig" :class="[p.w, { off: p.off }]">
                <svg width="32" height="32" viewBox="0 0 32 32" v-html="big[p.big]"></svg>
                <span>{{ p.l[0] }}</span>
                <span v-if="p.l[1]">{{ p.l[1] }}<svg v-if="p.inline" class="rd" width="6" height="4"><path d="M0 0h6L3 4z" fill="#666" /></svg></span>
                <svg v-if="p.drop" class="rdrop" width="6" height="4"><path d="M0 0h6L3 4z" fill="#ddd" /></svg>
              </button>
            </template>
          </div>
          <div class="rlabel">{{ g.label }}</div>
        </div>
      </div>

      <div class="exp-address">
        <button aria-label="Atrás" class="ar"><svg width="14" height="12" fill="none" stroke="#fff" stroke-width="2"><path d="M13 6H2M7 1L2 6l5 5" /></svg></button>
        <button aria-label="Adelante" class="ar"><svg width="14" height="12" fill="none" stroke="#808080" stroke-width="1.800"><path d="M1 6h11M7 1l5 5-5 5" /></svg></button>
        <button aria-label="Recientes" class="rec"><svg width="8" height="6" fill="none" stroke="#fff" stroke-width="1.600"><path d="M1 1l3 3 3-3" /></svg></button>
        <button aria-label="Subir" class="upb"><svg width="12" height="14" fill="none" stroke="#fff" stroke-width="2"><path d="M6 13V2M1 7l5-5 5 5" /></svg></button>
        <div class="pathbox">
          <svg class="i16" viewBox="0 0 16 16" v-html="small.winFolder"></svg>
          <template v-for="p in path" :key="p">
            <svg class="chev" width="5" height="8" fill="none" stroke="#8a8a8a" stroke-width="1.500"><path d="M1 1l3 3-3 3" /></svg><a href="#">{{ p }}</a>
          </template>
        </div>
      </div>

      <div class="exp-body">
        <ul class="navpane">
          <li v-for="(n, k) in nav" :key="k" :class="['l' + n.l, { sel: n.sel, gap: n.gap }]"><svg class="i16" viewBox="0 0 16 16" v-html="small[n.i]"></svg>{{ n.t }}</li>
        </ul>
        <div class="list">
          <table>
            <colgroup><col class="c1" /><col class="c2" /><col class="c3" /><col class="c4" /></colgroup>
            <thead>
              <tr>
                <th>Nombre<svg class="sort" width="9" height="5"><path d="M1 4.500L4.500 1 8 4.500" fill="none" stroke="#aaa" /></svg></th>
                <th>Fecha de modificación</th><th>Tipo</th><th>Tamaño</th>
              </tr>
            </thead>
            <tbody>
              <tr v-for="f in files" :key="f[0]">
                <td><span class="fname"><svg class="i16" viewBox="0 0 16 16" v-html="small.file"></svg>{{ f[0] }}</span></td>
                <td>{{ f[1] }}</td><td>{{ f[2] }}</td><td>{{ f[3] }}</td>
              </tr>
            </tbody>
          </table>
        </div>
      </div>
    </section>
  </div>
</template>

<style>
body { margin: 0; background: #191919; }
</style>

<style scoped>
* { box-sizing: border-box; }
.desktop { display: flex; height: 100vh; overflow: hidden; font: 11px/15px "Open Sans", "Noto Sans", sans-serif; color: #000; }
.defs { position: absolute; }
button { font: inherit; color: inherit; background: none; border: 0; padding: 0; margin: 0; }
a { color: inherit; text-decoration: none; }
ul { list-style: none; margin: 0; padding: 0; }
h1, h2, h3, h4 { margin: 0; font-size: 11px; }
svg { display: block; flex: none; }
.i16 { width: 16px; height: 16px; flex: none; }

/* IIS */
.iis { flex: 1366 1 0; min-width: 0; display: flex; flex-direction: column; background: #f0f0f0; border-right: 1px solid #fff; }
.iis-title { height: 23px; flex: none; display: flex; align-items: center; padding-left: 2px; gap: 5px; background: #4c4a48; color: #f2f2f2; }
.caption { margin-left: auto; display: flex; }
.caption button { width: 46px; height: 22px; display: grid; place-items: center; }
.iis-address { height: 32px; flex: none; display: flex; align-items: center; background: #b9d1ea; padding: 0 5px 2px 4px; }
.backfwd { width: 55px; height: 25px; border-radius: 12px; background: linear-gradient(#a3b9d2, #c3d7ee); border: 1px solid #a9c1db; border-top-color: #8497ae; display: flex; align-items: center; justify-content: space-between; padding: 0 4px; margin-right: 19px; }
.crumbs { flex: 1; height: 23px; border: 1px solid #8fb0d6; background: #eaf2fc; display: flex; align-items: center; padding-left: 5px; }
.crumbs a { padding: 0 12px 0 11px; }
.crumbs .i16 { margin-right: 8px; }
.addr-tools { display: flex; align-items: center; gap: 7px; margin-left: 9px; }
.addr-tools .bar { width: 1px; height: 14px; background: #eef5fd; margin-left: 1px; }
.helpbtn { display: flex; align-items: center; gap: 7px; margin-left: -4px; }
.iis-menu { height: 26px; flex: none; display: flex; align-items: center; gap: 20px; padding-left: 15px; background: linear-gradient(#fdfdfd, #e5e3e5); border-bottom: 1px solid #dcdcdc; }
.iis-body { flex: 1; min-height: 0; display: flex; gap: 6px; padding: 1px 1px 0 2px; }
.pane { border: 1px solid #8f8f93; border-bottom: 0; background: #fff; overflow: hidden; }
.pane h2 { height: 23px; line-height: 24px; padding-left: 7px; background: #bab8bb; }
.conn { width: 199px; flex: none; }
.conn-tools { height: 25px; display: flex; align-items: center; gap: 9px; padding-left: 2px; background: linear-gradient(#f7f6f7, #e3e1e3); border-bottom: 1px solid #4c4a5c; }
.conn-tools i { width: 1px; height: 16px; background: #c6c2b4; }
.tree li { height: 18px; display: flex; align-items: center; white-space: nowrap; }
.guide { width: 19px; height: 18px; flex: none; display: grid; place-items: center; background-repeat: no-repeat; }
.guide.line { background-image: repeating-linear-gradient(#999 0 1px, transparent 1px 2px); background-size: 1px 18px; background-position: 9px 0; }
.guide.tee { background-image: repeating-linear-gradient(#999 0 1px, transparent 1px 2px), repeating-linear-gradient(90deg, #999 0 1px, transparent 1px 2px); background-size: 1px 18px, 10px 1px; background-position: 9px 0, 9px 10px; }
.guide.elbow { background-image: repeating-linear-gradient(#999 0 1px, transparent 1px 2px), repeating-linear-gradient(90deg, #999 0 1px, transparent 1px 2px); background-size: 1px 10px, 10px 1px; background-position: 9px 0, 9px 10px; }
.dots { width: 2px; height: 1px; background: linear-gradient(90deg, #999 1px, transparent 1px); flex: none; }
.node { display: flex; align-items: center; gap: 4px; height: 18px; padding: 0 4px 0 1px; }
.node.sel { background: #cce8ff; }

.center { flex: 1; min-width: 0; display: flex; flex-direction: column; padding: 0 12px; }
.heading { height: 51px; flex: none; display: flex; align-items: center; gap: 18px; }
.heading h1 { font-size: 18px; line-height: 24px; font-weight: 400; }
.features { flex: 1; border: 1px solid #dcdcde; border-bottom: 0; }
.ftools { height: 29px; display: flex; align-items: center; padding-left: 7px; background: linear-gradient(#fafafa, #e0dee0); border-bottom: 1px solid #4c4a5c; }
.combo { height: 23px; background: #fff; display: flex; align-items: center; padding-right: 4px; }
.combo input, .combo select { flex: 1; min-width: 0; border: 0; padding: 0; background: none; font: inherit; color: inherit; appearance: none; outline: 0; }
.fcombo { width: 121px; margin: 0 4px 0 6px; }
.gcombo { width: 115px; margin: 0 3px 0 6px; padding-left: 4px; }
.go { display: flex; align-items: center; gap: 3px; color: #8a8a8a; }
.godrop { margin-left: 7px; }
.all { display: flex; align-items: center; gap: 3px; margin-left: 4px; }
.ftools > i { width: 1px; height: 17px; background: #c3bfae; margin: 0 6px 0 9px; }
.viewbtn { display: flex; align-items: center; gap: 3px; }
.group h3 { height: 21px; display: flex; align-items: center; font-weight: 400; color: #28348c; padding: 0 8px 0 12px; }
.group h3 i { flex: 1; height: 1px; background: #a9b6cf; margin: 0 8px 0 4px; }
.tiles { display: flex; flex-wrap: wrap; padding: 3px 13px 0 0; align-items: flex-start; }
.tile { width: 75px; height: 75px; padding-right: 2px; display: flex; flex-direction: column; align-items: center; line-height: 15px; white-space: nowrap; }
.tile svg { margin-bottom: 4px; }

.actions { width: 200px; flex: none; background: linear-gradient(90deg, #f0eff1, #fcfcfc); }
.act-body { padding: 5px 4px 0 2px; }
.act-body a { height: 20px; display: flex; align-items: center; gap: 9px; padding: 0 0 0 3px; color: #3a8fd0; }
.act-body hr { border: 0; border-top: 1px solid #8d8d92; margin: 1px 0 2px; }
.act-body h3 { height: 25px; display: flex; align-items: center; justify-content: space-between; padding: 0 9px 0 5px; background: linear-gradient(90deg, #e6e4e6, #fbfbfb); margin-bottom: 1px; }
.act-body h3 button { width: 16px; height: 16px; border-radius: 8px; border: 1px solid #8f8f94; background: #f4f4f4; display: grid; place-items: center; }
.act-body h4 { height: 20px; line-height: 20px; padding-left: 28px; }
.act-body .last { margin-top: 1px; }

/* Explorer */
.exp { flex: 1132 1 0; min-width: 0; display: flex; flex-direction: column; background: #191919; color: #fff; }
.exp-title { height: 23px; flex: none; display: flex; align-items: center; background: #2b2b2b; color: #9b9b9b; }
.exp-title > i { width: 3px; height: 12px; border: solid #6a6a6a; border-width: 0 1px; margin: 0 8px 0 6px; }
.exp-title > .i16 { margin-left: 1px; }
.exp-title button + button { margin-left: 6px; }
.qat { margin-left: 6px; }
.exp-title > i.second { margin: 0 6px 0 7px; }
.tabs { height: 23px; flex: none; display: flex; background: #000; }
.t-file { width: 56px; background: #555351; }
.t-home { width: 56px; background: #202020; }
.t-share { width: 81px; }
.t-view { width: 53px; }
.ribbon { height: 92px; flex: none; display: flex; background: #202020; border-bottom: 1px solid #2c2c2c; }
.rgroup { display: flex; flex-direction: column; border-right: 1px solid #2a2a2a; flex: none; position: relative; }
.rgroup::after { content: ""; position: absolute; right: -1px; top: 3px; height: 72px; width: 1px; background: #474747; }
.g-clip { width: 310px; }
.g-org { width: 196px; }
.g-new { width: 173px; }
.g-open { width: 149px; }
.g-sel { width: 160px; }
.rcontent { height: 75px; display: flex; padding-left: 3px; }
.g-clip .rcontent { padding-left: 4px; }
.g-sel .rcontent { padding-left: 7px; }
.rlabel { text-align: center; color: #b0b0b0; line-height: 16px; }
.rbig { display: flex; flex-direction: column; align-items: center; padding-top: 8px; line-height: 13px; white-space: nowrap; }
.rbig > svg:first-child { margin-bottom: 3px; }
.rbig span { display: flex; align-items: center; justify-content: center; gap: 3px; }
.rdrop { margin-top: 3px; }
.w78 { width: 78px; } .w40 { width: 40px; } .w42 { width: 42px; } .w46 { width: 46px; } .w70 { width: 70px; }
.off { color: #a0a0a0; }
.rsep { width: 1px; height: 54px; margin: 10px 3px 0 5px; background: #4a4a4a; }
.rlist { padding-top: 4px; margin-left: 1px; }
.g-open .rlist { margin-left: 4px; }
.g-sel .rlist { margin-left: 0; }
.rlist button { height: 22px; display: flex; align-items: center; gap: 3px; white-space: nowrap; }
.rlist .off { color: #b2b2b2; }
.rlist .rd { margin-left: 2px; }
.exp-address { height: 42px; flex: none; display: flex; align-items: center; padding-left: 12px; }
.ar { margin-right: 14px; }
.rec { margin-right: 11px; }
.upb { margin-right: 7px; }
.pathbox { flex: 1; height: 30px; border: 1px solid #535353; border-right: 0; display: flex; align-items: center; padding-left: 4px; }
.pathbox .i16 { margin-right: 4px; }
.pathbox a { padding: 0 10px 0 9px; }
.exp-body { flex: 1; min-height: 0; display: flex; }
.navpane { width: 195px; flex: none; border-right: 1px solid #2b2b2b; padding: 18px 2px 0 1px; overflow: hidden; }
.navpane li { height: 22px; margin-bottom: 2px; display: flex; align-items: center; gap: 4px; white-space: nowrap; }
.navpane li.gap { margin-bottom: 10px; }
.l0 { padding-left: 24px; } .l1 { padding-left: 32px; } .l2 { padding-left: 40px; }
.navpane .sel { background: #333; }
.list { flex: 1; min-width: 0; background: #202020; }
table { border-collapse: collapse; table-layout: fixed; width: 617px; }
.c1 { width: 273px; } .c2 { width: 144px; } .c3 { width: 121px; } .c4 { width: 79px; }
th { height: 26px; text-align: left; font-weight: 400; color: #dedede; padding: 2px 6px 0; border-right: 1px solid #636363; position: relative; white-space: nowrap; }
th:first-child { padding-left: 19px; }
.sort { position: absolute; left: 50%; top: 1px; }
td { height: 21px; padding: 0 6px; color: #dedede; white-space: nowrap; }
td:first-child { padding-left: 20px; color: #fff; }
td:last-child { text-align: right; padding-right: 8px; }
tbody tr:first-child td { height: 27px; padding-top: 6px; }
.fname { display: flex; align-items: center; gap: 4px; }
</style>
